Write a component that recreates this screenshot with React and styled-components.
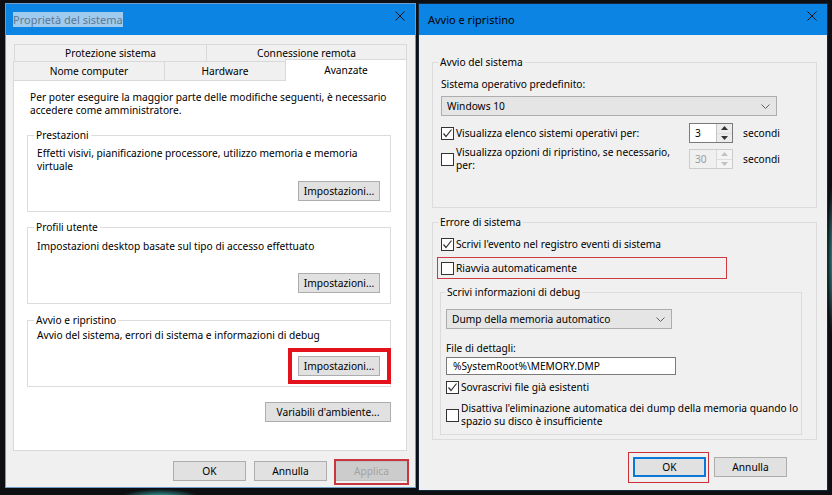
import React from 'react';
import styled, { createGlobalStyle, css } from 'styled-components';

const GlobalStyle = createGlobalStyle`
  * { box-sizing: border-box; }
  html, body { margin: 0; padding: 0; }
  body {
    background: #0e0f12;
    font-family: "Noto Sans", "Segoe UI", sans-serif;
    font-size: 10.2px;
    white-space: nowrap;
    color: #000;
  }
`;

const Desktop = styled.div`
  width: 832px;
  height: 495px;
  overflow: hidden;
  display: flex;
  align-items: flex-start;
  gap: 2px;
  padding: 3px 0 0 5px;
  background:
    radial-gradient(ellipse 40px 9px at 160px 498px, #3cc3c0 0%, rgba(60, 195, 192, 0) 100%),
    radial-gradient(ellipse 7px 80px at 834px 260px, #2fa9ac 0%, rgba(47, 169, 172, 0) 100%),
    #0e0f12;
`;

const Window = styled.div`
  width: ${p => p.$w}px;
  height: ${p => p.$h}px;
  flex: none;
  display: flex;
  flex-direction: column;
  background: #f0f0f0;
  border: 1px solid ${p => (p.$active ? '#15283d' : '#6f9cc9')};
`;

const TitleBar = styled.div`
  height: 31px;
  flex: none;
  display: flex;
  align-items: center;
  justify-content: space-between;
  padding: 0 10px 0 ${p => p.$padL}px;
  background: #0b84e3;
  font-size: 11px;
`;

const TitleText = styled.span`
  line-height: 13px;
  padding: 1px 0;
  color: ${p => (p.$inactive ? '#607890' : '#000')};
  background: ${p => (p.$inactive ? '#9fcbef' : 'transparent')};
`;

const CloseGlyph = styled.svg`
  align-self: flex-start;
  margin-top: 7px;
`;

const Body = styled.div`
  flex: 1;
  display: flex;
  flex-direction: column;
  background: inherit;
  padding: ${p => p.$pad};
`;

const TabRow = styled.div`
  display: flex;
  align-items: flex-end;
  height: ${p => p.$h}px;
  margin-left: ${p => p.$indent || 0}px;
  position: relative;
  z-index: 1;
`;

const Tab = styled.div`
  width: ${p => p.$w}px;
  height: ${p => (p.$selected ? 22 : p.$rowH)}px;
  margin-bottom: ${p => (p.$selected ? -1 : 0)}px;
  display: flex;
  align-items: center;
  justify-content: center;
  padding-bottom: ${p => (p.$selected ? 2 : 0)}px;
  border: 1px solid #d9d9d9;
  border-bottom: 0;
  background: ${p => (p.$selected ? '#fff' : '#f0f0f0')};
  & + & {
    margin-left: -1px;
  }
`;

const TabPanel = styled.div`
  width: 394px;
  height: 371px;
  display: flex;
  flex-direction: column;
  background: #fff;
  border: 1px solid #d9d9d9;
  padding: 10px 15px 0 13px;
`;

const Paragraph = styled.div`
  line-height: 13px;
  margin-top: ${p => p.$mt || 0}px;
  margin-left: ${p => p.$ml || 0}px;
`;

const GroupBox = styled.div`
  display: flex;
  flex-direction: column;
  flex: none;
  width: ${p => (p.$w ? `${p.$w}px` : 'auto')};
  height: ${p => p.$h}px;
  margin-top: ${p => p.$mt || 0}px;
  margin-left: ${p => p.$ml || 0}px;
  border: 1px solid #dcdcdc;
  padding: ${p => p.$pad || '0 10px 10px 9px'};
  background: inherit;
`;

const GroupTitle = styled.span`
  align-self: flex-start;
  margin: -7px 0 0 ${p => p.$indent ?? -3}px;
  padding: 0 2px;
  line-height: 13px;
  background: inherit;
`;

const Button = styled.button`
  position: relative;
  flex: none;
  width: ${p => p.$w || 73}px;
  height: 20px;
  margin: ${p => p.$margin || 0};
  padding: 0;
  font: inherit;
  align-self: ${p => p.$align || 'auto'};
  color: ${p => (p.disabled ? '#a3a3a3' : '#000')};
  background: ${p => (p.disabled ? '#cccccc' : '#e1e1e1')};
  border: 1px solid ${p => (p.disabled ? '#bfbfbf' : p.$default ? '#0a78d7' : '#adadad')};
  box-shadow: ${p => (p.$default ? 'inset 0 0 0 1px #0a78d7' : 'none')};
  ${p =>
    p.$mark &&
    css`
      &::after {
        content: '';
        position: absolute;
        top: -${p.$mark.t}px;
        right: -${p.$mark.r}px;
        bottom: -${p.$mark.b}px;
        left: -${p.$mark.l}px;
        border: ${p.$mark.w}px solid ${p.$mark.c};
        pointer-events: none;
      }
    `}
`;

const Footer = styled.div`
  display: flex;
  justify-content: flex-end;
  gap: 8px;
  margin-top: ${p => p.$mt}px;
  margin-right: ${p => p.$mr || 0}px;
`;

const Combo = styled.div`
  width: ${p => p.$w}px;
  height: 20px;
  flex: none;
  margin-top: ${p => p.$mt || 0}px;
  display: flex;
  align-items: center;
  justify-content: space-between;
  padding: 0 6px 0 5px;
  background: #e5e5e5;
  border: 1px solid #adadad;
`;

const OptionRow = styled.div`
  display: flex;
  align-items: center;
  flex: none;
  min-height: ${p => p.$h || 14}px;
  margin-top: ${p => p.$mt || 0}px;
  ${p =>
    p.$marked &&
    css`
      width: 290px;
      height: 22px;
      margin-left: -4px;
      padding-left: 3px;
      border: 1px solid #cf3a42;
    `}
`;

const CheckLabel = styled.label`
  display: flex;
  align-items: center;
  gap: 2px;
  width: ${p => (p.$w ? `${p.$w}px` : 'auto')};
  line-height: 13px;
`;

const Box = styled.span`
  width: 13px;
  height: 13px;
  flex: none;
  display: flex;
  align-items: center;
  justify-content: center;
  border: 1px solid #333;
  background: #fff;
`;

const Spin = styled.div`
  width: 44px;
  height: 20px;
  flex: none;
  display: flex;
  border: 1px solid ${p => (p.$disabled ? '#cccccc' : '#7a7a7a')};
  background: ${p => (p.$disabled ? '#f0f0f0' : '#fff')};
`;

const SpinValue = styled.div`
  flex: 1;
  display: flex;
  align-items: center;
  padding-left: 5px;
  color: ${p => (p.$disabled ? '#9a9a9a' : '#000')};
`;

const SpinButtons = styled.div`
  width: 16px;
  display: flex;
  flex-direction: column;
  border-left: 1px solid ${p => (p.$disabled ? '#d9d9d9' : '#c4c4c4')};
  background: ${p => (p.$disabled ? '#f4f4f4' : '#ececec')};
`;

const SpinHalf = styled.div`
  flex: 1;
  display: flex;
  align-items: center;
  justify-content: center;
  & + & {
    border-top: 1px solid ${p => (p.$disabled ? '#dedede' : '#c4c4c4')};
  }
`;

const Unit = styled.span`
  margin-left: 10px;
`;

const TextField = styled.div`
  width: 230px;
  height: 18px;
  flex: none;
  margin-top: ${p => p.$mt || 0}px;
  display: flex;
  align-items: center;
  padding-left: 6px;
  background: #fff;
  border: 1px solid #7a7a7a;
`;

const Close = () => (
  <CloseGlyph width="10" height="10" viewBox="0 0 10 10">
    <path d="M0.5 0.5L9.5 9.5M9.5 0.5L0.5 9.5" stroke="#111" strokeWidth="1" fill="none" />
  </CloseGlyph>
);

const Chevron = () => (
  <svg width="9" height="5" viewBox="0 0 9 5">
    <polyline points="0.5,0.5 4.5,4.5 8.5,0.5" stroke="#606060" strokeWidth="1" fill="none" />
  </svg>
);

const Check = ({ checked, children, w }) => (
  <CheckLabel $w={w}>
    <Box>
      {checked && (
        <svg width="11" height="11" viewBox="0 0 11 11">
          <polyline points="1.5,5.5 4,8.5 9.5,1.5" stroke="#333" strokeWidth="1.2" fill="none" />
        </svg>
      )}
    </Box>
    <span>{children}</span>
  </CheckLabel>
);

const Spinner = ({ value, disabled }) => {
  const c = disabled ? '#c2c2c2' : '#333';
  return (
    <Spin $disabled={disabled}>
      <SpinValue $disabled={disabled}>{value}</SpinValue>
      <SpinButtons $disabled={disabled}>
        <SpinHalf $disabled={disabled}>
          <svg width="7" height="4" viewBox="0 0 7 4"><polygon points="0,4 3.5,0 7,4" fill={c} /></svg>
        </SpinHalf>
        <SpinHalf $disabled={disabled}>
          <svg width="7" height="4" viewBox="0 0 7 4"><polygon points="0,0 3.5,4 7,0" fill={c} /></svg>
        </SpinHalf>
      </SpinButtons>
    </Spin>
  );
};

const SystemProperties = () => (
  <Window $w={411} $h={485}>
    <TitleBar $padL={7}>
      <TitleText $inactive>Proprietà del sistema</TitleText>
      <Close />
    </TitleBar>
    <Body $pad="9px 7px 0 7px">
      <TabRow $h={17} $indent={1}>
        <Tab $w={193} $rowH={17}>Protezione sistema</Tab>
        <Tab $w={201} $rowH={17}>Connessione remota</Tab>
      </TabRow>
      <TabRow $h={19}>
        <Tab $w={152} $rowH={19}>Nome computer</Tab>
        <Tab $w={122} $rowH={19}>Hardware</Tab>
        <Tab $w={122} $rowH={19} $selected>Avanzate</Tab>
      </TabRow>
      <TabPanel>
        <Paragraph $ml={3}>
          Per poter eseguire la maggior parte delle modifiche seguenti, è necessario
          <br />
          accedere come amministratore.
        </Paragraph>

        <GroupBox $h={77} $mt={18}>
          <GroupTitle>Prestazioni</GroupTitle>
          <Paragraph $mt={5}>
            Effetti visivi, pianificazione processore, utilizzo memoria e memoria
            <br />
            virtuale
          </Paragraph>
          <Button $w={82} $align="flex-end" $margin="auto 0 0 0">Impostazioni...</Button>
        </GroupBox>

        <GroupBox $h={77} $mt={15}>
          <GroupTitle>Profili utente</GroupTitle>
          <Paragraph $mt={6}>Impostazioni desktop basate sul tipo di accesso effettuato</Paragraph>
          <Button $w={82} $align="flex-end" $margin="auto 0 0 0">Impostazioni...</Button>
        </GroupBox>

        <GroupBox $h={67} $mt={16}>
          <GroupTitle>Avvio e ripristino</GroupTitle>
          <Paragraph $mt={2}>Avvio del sistema, errori di sistema e informazioni di debug</Paragraph>
          <Button
            $w={82}
            $align="flex-end"
            $margin="auto 0 0 0"
            $mark={{ t: 9, r: 12, b: 9, l: 11, w: 4, c: '#e3121c' }}
          >
            Impostazioni...
          </Button>
        </GroupBox>

        <Button $w={126} $align="flex-end" $margin="15px 0 0 0">Variabili d'ambiente...</Button>
      </TabPanel>
      <Footer $mt={10}>
        <Button>OK</Button>
        <Button>Annulla</Button>
        <Button disabled $mark={{ t: 3, r: 2, b: 5, l: 2, w: 2, c: '#c9363e' }}>Applica</Button>
      </Footer>
    </Body>
  </Window>
);

const StartupRecovery = () => (
  <Window $w={410} $h={488} $active>
    <TitleBar $padL={9}>
      <TitleText>Avvio e ripristino</TitleText>
      <Close />
    </TitleBar>
    <Body $pad="27px 10px 0 13px">
      <GroupBox $h={146} $pad="0 10px 0 8px">
        <GroupTitle>Avvio del sistema</GroupTitle>
        <Paragraph $mt={9}>Sistema operativo predefinito:</Paragraph>
        <Combo $w={336} $mt={5}>
          <span>Windows 10</span>
          <Chevron />
        </Combo>
        <OptionRow $h={20} $mt={7}>
          <Check checked w={248}>Visualizza elenco sistemi operativi per:</Check>
          <Spinner value="3" />
          <Unit>secondi</Unit>
        </OptionRow>
        <OptionRow $h={26} $mt={3}>
          <Check w={248}>
            Visualizza opzioni di ripristino, se necessario,
            <br />
            per:
          </Check>
          <Spinner value="30" disabled />
          <Unit>secondi</Unit>
        </OptionRow>
      </GroupBox>

      <GroupBox $h={218} $mt={14} $pad="0 10px 0 8px">
        <GroupTitle>Errore di sistema</GroupTitle>
        <OptionRow $mt={8}>
          <Check checked>Scrivi l'evento nel registro eventi di sistema</Check>
        </OptionRow>
        <OptionRow $mt={6} $marked>
          <Check>Riavvia automaticamente</Check>
        </OptionRow>

        <GroupBox $w={362} $h={143} $mt={13} $ml={-1} $pad="0 10px 0 5px">
          <GroupTitle $indent={-1}>Scrivi informazioni di debug</GroupTitle>
          <Combo $w={226} $mt={10}>
            <span>Dump della memoria automatico</span>
            <Chevron />
          </Combo>
          <Paragraph $mt={13}>File di dettagli:</Paragraph>
          <TextField $mt={2}>%SystemRoot%\MEMORY.DMP</TextField>
          <OptionRow $mt={5}>
            <Check checked>Sovrascrivi file già esistenti</Check>
          </OptionRow>
          <OptionRow $mt={8} $h={26}>
            <Check>
              Disattiva l'eliminazione automatica dei dump della memoria quando lo
              <br />
              spazio su disco è insufficiente
            </Check>
          </OptionRow>
        </GroupBox>
      </GroupBox>

      <Footer $mt={17} $mr={30}>
        <Button $default $mark={{ t: 6, r: 4, b: 7, l: 6, w: 1, c: '#cc2f38' }}>OK</Button>
        <Button>Annulla</Button>
      </Footer>
    </Body>
  </Window>
);

const App = () => (
  <>
    <GlobalStyle />
    <Desktop>
      <SystemProperties />
      <StartupRecovery />
    </Desktop>
  </>
);

export default App;
